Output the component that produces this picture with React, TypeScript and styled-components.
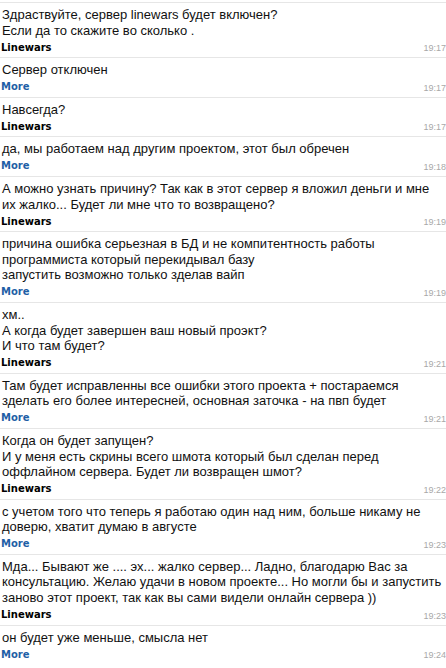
import React from "react";
import styled, { createGlobalStyle } from "styled-components";

type Message = {
  text: string;
  from: "Linewars" | "More";
  time: string;
};

const messages: Message[] = [
  {
    text: "Здраствуйте, сервер linewars будет включен?\nЕсли да то скажите во сколько .",
    from: "Linewars",
    time: "19:17",
  },
  { text: "Сервер отключен", from: "More", time: "19:17" },
  { text: "Навсегда?", from: "Linewars", time: "19:17" },
  {
    text: "да, мы работаем над другим проектом, этот был обречен",
    from: "More",
    time: "19:18",
  },
  {
    text: "А можно узнать причину? Так как в этот сервер я вложил деньги и мне\nих жалко... Будет ли мне что то возвращено?",
    from: "Linewars",
    time: "19:19",
  },
  {
    text: "причина ошибка серьезная в БД и не компитентность работы\nпрограммиста который перекидывал базу\nзапустить возможно только зделав вайп",
    from: "More",
    time: "19:19",
  },
  {
    text: "хм..\nА когда будет завершен ваш новый проэкт?\nИ что там будет?",
    from: "Linewars",
    time: "19:21",
  },
  {
    text: "Там будет исправленны все ошибки этого проекта + постараемся\nзделать его более интересней, основная заточка - на пвп будет",
    from: "More",
    time: "19:21",
  },
  {
    text: "Когда он будет запущен?\nИ у меня есть скрины всего шмота который был сделан перед\nоффлайном сервера. Будет ли возвращен шмот?",
    from: "Linewars",
    time: "19:22",
  },
  {
    text: "с учетом того что теперь я работаю один над ним, больше никаму не\nдоверю, хватит думаю в августе",
    from: "More",
    time: "19:23",
  },
  {
    text: "Мда... Бывают же .... эх... жалко сервер... Ладно, благодарю Вас за\nконсультацию. Желаю удачи в новом проекте... Но могли бы и запустить\nзаново этот проект, так как вы сами видели онлайн сервера ))",
    from: "Linewars",
    time: "19:23",
  },
  { text: "он будет уже меньше, смысла нет", from: "More", time: "19:24" },
];

function App() {
  return (
    <>
      <GlobalStyle />
      <S.Thread>
        {messages.map((m, i) => (
          <S.Item key={i}>
            <S.Body>{m.text}</S.Body>
            <S.Footer>
              <S.Author $staff={m.from === "More"}>{m.from}</S.Author>
              <S.Time>{m.time}</S.Time>
            </S.Footer>
          </S.Item>
        ))}
      </S.Thread>
    </>
  );
}

const GlobalStyle = createGlobalStyle`
  html, body {
    margin: 0;
    padding: 0;
    background: #ffffff;
  }
`;

//@styled
const S = {
  Thread: styled.div`
    width: 446px;
    padding-top: 2px;
    display: flex;
    flex-direction: column;
    overflow: hidden;
  `,
  Item: styled.div`
    border-top: 1px solid #e6e6e6;
    padding: 4px 0 2px;
    display: flex;
    flex-direction: column;
  `,
  Body: styled.div`
    padding-left: 2px;
    font-family: "Liberation Sans", Arial, sans-serif;
    font-size: 13px;
    line-height: 15.6px;
    color: #111111;
    white-space: pre;
    overflow: hidden;
  `,
  Footer: styled.div`
    display: flex;
    justify-content: space-between;
    align-items: center;
    height: 16px;
    padding-top: 1px;
  `,
  Author: styled.span<{ $staff: boolean }>`
    padding-left: 1px;
    font-family: "DejaVu Sans", Verdana, sans-serif;
    font-weight: bold;
    font-size: 10px;
    color: ${({ $staff }) => ($staff ? "#1f5fa6" : "#000000")};
  `,
  Time: styled.span`
    font-family: "Liberation Sans", Arial, sans-serif;
    font-size: 9px;
    color: #a8a8a8;
    padding-top: 2px;
  `,
};

export default App;
